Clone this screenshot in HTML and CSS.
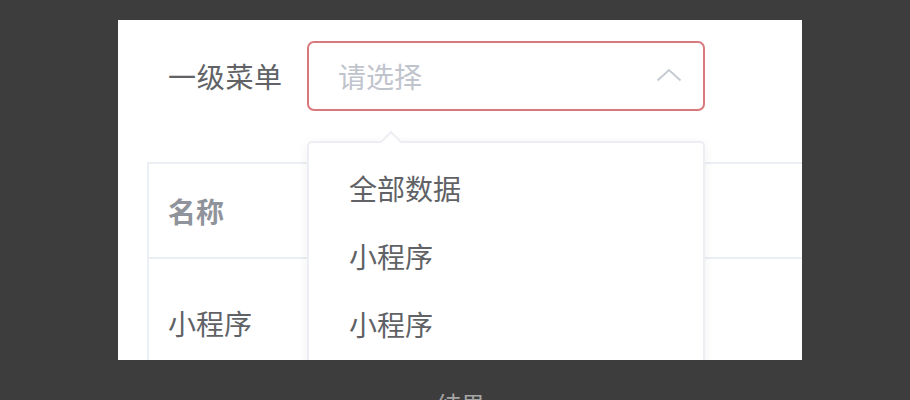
FILE: index.html
```html
<!DOCTYPE html>
<html lang="zh">
<head>
<meta charset="utf-8">
<link rel="stylesheet" href="styles.css">
</head>
<body>
<div class="panel">
  <div class="form-row">
    <span class="label">一级菜单</span>
    <div class="select">
      <span class="placeholder">请选择</span>
      <svg class="chevron" width="26" height="14" viewBox="0 0 26 14"><polyline points="1.5,12.5 13,2 24.5,12.5" fill="none" stroke="#c5cad3" stroke-width="2"/></svg>
    </div>
  </div>
  <div class="table">
    <div class="row head"><div class="cell">名称</div></div>
    <div class="row"><div class="cell">小程序</div></div>
  </div>
  <div class="dropdown">
    <div class="arrow"></div>
    <ul class="options">
      <li>全部数据</li>
      <li>小程序</li>
      <li>小程序</li>
    </ul>
  </div>
</div>
<div class="caption">结果</div>
</body>
</html>
```

FILE: styles.css
```css
html, body {
  margin: 0;
  padding: 0;
  background: #3d3d3d;
  font-family: "Noto Sans CJK SC", "Noto Sans", sans-serif;
}
.panel {
  position: relative;
  margin: 20px 0 0 118px;
  width: 684px;
  height: 340px;
  background: #ffffff;
  overflow: hidden;
}
.form-row {
  display: flex;
  align-items: center;
  padding: 21px 0 0 50px;
  gap: 24px;
}
.label {
  width: 115px;
  font-size: 28px;
  letter-spacing: 0.7px;
  color: #606266;
  line-height: 70px;
  white-space: nowrap;
}
.select {
  box-sizing: border-box;
  flex: 0 0 398px;
  width: 398px;
  height: 70px;
  border: 2px solid #d9797c;
  border-radius: 7px;
  display: flex;
  align-items: center;
  justify-content: space-between;
  padding: 0 21px 0 29px;
}
.placeholder {
  font-size: 28px;
  color: #c0c4cc;
}
.chevron {
  display: block;
  margin-top: -2px;
}
.table {
  margin: 51px 0 0 29px;
  border-top: 2px solid #ebeef5;
  border-left: 2px solid #ebeef5;
}
.row {
  border-bottom: 2px solid #ebeef5;
}
.row.head {
  height: 93px;
  display: flex;
  align-items: center;
}
.row:not(.head) {
  height: 140px;
  display: flex;
  align-items: flex-start;
  padding-top: 44px;
  box-sizing: border-box;
}
.cell {
  padding-left: 19px;
  font-size: 28px;
  color: #606266;
}
.head .cell {
  font-weight: bold;
  color: #8f939b;
}
.dropdown {
  position: absolute;
  left: 189px;
  top: 121px;
  width: 398px;
  height: 260px;
  box-sizing: border-box;
  background: #fff;
  border: 2px solid #eceef3;
  border-radius: 5px;
  box-shadow: 0 2px 12px rgba(0, 0, 0, 0.06);
}
.arrow {
  position: absolute;
  left: 74px;
  top: -9px;
  width: 14px;
  height: 14px;
  background: #fff;
  border-left: 2px solid #eceef3;
  border-top: 2px solid #eceef3;
  transform: rotate(45deg);
}
.options {
  list-style: none;
  margin: 0;
  padding: 11px 0 0 0;
}
.options li {
  font-size: 28px;
  line-height: 68px;
  padding-left: 40px;
  color: #606266;
}
.caption {
  padding: 26px 0 0 12px;
  text-align: center;
  font-size: 24px;
  color: #a6a6a6;
}
```
